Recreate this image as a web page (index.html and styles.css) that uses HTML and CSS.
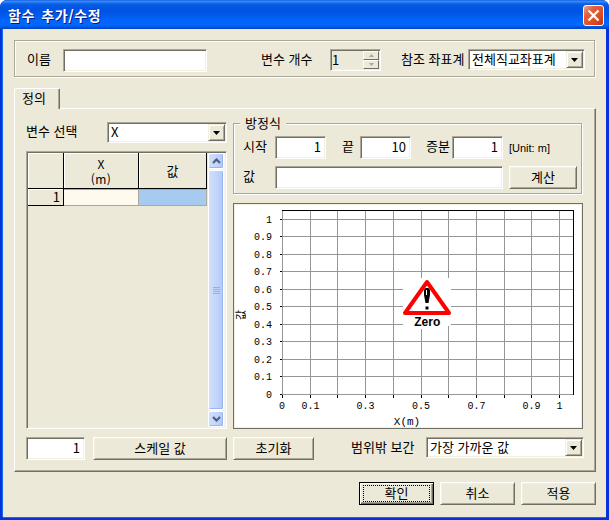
FILE: index.html
```html
<!DOCTYPE html>
<html lang="ko">
<head>
<meta charset="utf-8">
<title>함수 추가/수정</title>
<link rel="stylesheet" href="styles.css">
</head>
<body>
<div class="window">
  <header class="titlebar">
    <h1>함수 추가/수정</h1>
    <button class="close" aria-label="닫기"><svg width="21" height="21" viewBox="0 0 21 21"><path d="M5.5 5.5 15.5 15.5M15.5 5.5 5.5 15.5" stroke="#fff" stroke-width="2.3"/></svg></button>
  </header>
  <main class="client">
    <section class="etched general">
      <label class="l-name">이름</label><div class="field f-name"></div>
      <label class="l-count">변수 개수</label>
      <div class="field spinner"><span>1</span><div class="spin"><i><svg width="5" height="3"><path d="M0 3 2.5 0 5 3z"/></svg></i><i><svg width="5" height="3"><path d="M0 0 2.5 3 5 0z"/></svg></i></div></div>
      <label class="l-ref">참조 좌표계</label>
      <div class="field combo c-ref"><span>전체직교좌표계</span><i class="drop"><svg width="7" height="4"><path d="M0 0H7L3.5 4z"/></svg></i></div>
    </section>
    <div class="tab">정의</div>
    <section class="panel">
      <div class="columns">
        <div class="left">
          <div class="select-row"><label>변수 선택</label><div class="field combo c-var"><span>X</span><i class="drop"><svg width="7" height="4"><path d="M0 0H7L3.5 4z"/></svg></i></div></div>
          <div class="table field">
            <div class="sheet">
              <div class="hd"></div><div class="hd"><div class="sym">X</div><div class="sym dim">(m)</div></div><div class="hd">값</div>
              <div class="rowno">1</div><div class="cell"></div><div class="cell selected"></div>
            </div>
            <div class="scroll">
              <div class="sbtn"><svg width="9" height="6"><path d="M1 5 4.5 1.5 8 5"/></svg></div>
              <div class="thumb"><b></b><b></b><b></b><b></b></div>
              <div class="sbtn"><svg width="9" height="6"><path d="M1 1 4.5 4.5 8 1"/></svg></div>
            </div>
          </div>
        </div>
        <div class="right">
          <section class="etched equation">
            <h2>방정식</h2>
            <div class="eq-row"><label class="e1">시작</label><div class="field num">1</div><label class="e2">끝</label><div class="field num">10</div><label class="e3">증분</label><div class="field num">1</div><label class="unit">[Unit: m]</label></div>
            <div class="eq-row"><label class="e1">값</label><div class="field formula"></div><button class="btn calc">계산</button></div>
          </section>
          <div class="chart">
            <svg width="348" height="224" viewBox="234 204 348 224">
              <path class="grid" d="M282 219.5H573M282 236.5H573M282 254.5H573M282 271.5H573M282 289.5H573M282 306.5H573M282 324.5H573M282 341.5H573M282 359.5H573M282 376.5H573M282 394.5H573M282.5 211V395M310.5 211V395M337.5 211V395M365.5 211V395M393.5 211V395M421.5 211V395M448.5 211V395M476.5 211V395M504.5 211V395M531.5 211V395M559.5 211V395"/>
              <path class="axis" d="M282 210.5H573.5V395M280 219.5h2M280 236.5h2M280 254.5h2M280 271.5h2M280 289.5h2M280 306.5h2M280 324.5h2M280 341.5h2M280 359.5h2M280 376.5h2M280 394.5h2M282.5 395v3M310.5 395v3M337.5 395v3M365.5 395v3M393.5 395v3M421.5 395v3M448.5 395v3M476.5 395v3M504.5 395v3M531.5 395v3M559.5 395v3"/>
              <g class="ticks y">
                <text x="272" y="223">1</text><text x="272" y="240">0.9</text><text x="272" y="258">0.8</text><text x="272" y="275">0.7</text><text x="272" y="293">0.6</text><text x="272" y="310">0.5</text><text x="272" y="328">0.4</text><text x="272" y="345">0.3</text><text x="272" y="363">0.2</text><text x="272" y="380">0.1</text><text x="272" y="398">0</text>
              </g>
              <g class="ticks x">
                <text x="282" y="409">0</text><text x="310.5" y="409">0.1</text><text x="365.5" y="409">0.3</text><text x="421" y="409">0.5</text><text x="476.5" y="409">0.7</text><text x="531.5" y="409">0.9</text><text x="559.5" y="409">1</text>
              </g>
              <text class="xname" x="407" y="425">X(m)</text>
              <text class="yname" transform="translate(244.5 315) rotate(-90)">값</text>
              <path d="M403 278H451V326H442V329H412V326H403z" fill="#fff"/>
              <path d="M427 282 449 313H405z" fill="#fff" stroke="#f00" stroke-width="4" stroke-linejoin="round"/>
              <path d="M425.5 288h3l1.5 2v5l-1.5 8h-3l-1.5-8v-5zM425.5 306.500h3v3h-3z" fill="#000"/>
              <path d="M426.5 290v5" stroke="#fff" stroke-width="1"/>
              <text class="zero" x="427.3" y="326">Zero</text>
            </svg>
          </div>
        </div>
      </div>
      <div class="tools">
        <div class="field num scale">1</div><button class="btn b-scale">스케일 값</button><button class="btn b-reset">초기화</button>
        <label class="l-out">범위밖 보간</label>
        <div class="field combo c-out"><span>가장 가까운 값</span><i class="drop"><svg width="7" height="4"><path d="M0 0H7L3.5 4z"/></svg></i></div>
      </div>
    </section>
    <footer class="actions"><button class="btn default"><span>확인</span></button><button class="btn">취소</button><button class="btn">적용</button></footer>
  </main>
</div>
</body>
</html>
```
FILE: styles.css
```css
* { box-sizing: border-box; }
body {
  margin: 0;
  background: #fff;
  color: #000;
  font: 13px/15px "Noto Sans CJK KR", "Liberation Sans", sans-serif;
}
h1, h2 { margin: 0; font-size: inherit; font-weight: normal; }
label, span { white-space: nowrap; }
svg { display: block; }
i { font-style: normal; }

.window {
  width: 609px;
  height: 520px;
  border-radius: 7px 7px 0 0;
  overflow: hidden;
  background: #0831d9;
}
.titlebar {
  height: 29px;
  display: flex;
  justify-content: space-between;
  padding: 5px 5px 0 8px;
  background: linear-gradient(#0a4fd4 0, #3c90ff 1px, #2a80f6 2px, #0a5fe6 4px, #0054e3 8px, #0055e5 13px, #0064fa 20px, #0068ff 25px, #0055e0 27px, #0042c4 29px);
}
.titlebar h1 {
  color: #fff;
  font-size: 14px;
  font-weight: bold;
  line-height: 20px;
  letter-spacing: .55px;
  word-spacing: 2px;
  text-shadow: 1px 1px #0a1883;
}
.close {
  width: 21px;
  height: 21px;
  padding: 0;
  border: 1px solid #fff;
  border-radius: 3px;
  background: linear-gradient(135deg, #f0a48c 0, #e2603c 30%, #dc4a20 70%, #b93412 100%);
}
.close svg { margin: -1px; }
.client {
  height: 488px;
  margin: 0 3px;
  padding: 11px 0 0 11px;
  background: #ece9d8;
  box-shadow: -1px 0 #166aee, 0 1px #166aee, 1px 0 #0831d9;
}

.etched {
  border: 1px solid #aca899;
  box-shadow: inset 1px 1px #fff, 1px 1px #fff;
}
.field {
  background: #fff;
  border: 1px solid;
  border-color: #aca899 #fff #fff #aca899;
  box-shadow: inset 1px 1px #716f64, inset -1px -1px #f1efe2;
}
.combo {
  display: flex;
  justify-content: space-between;
  height: 21px;
  padding: 1px;
}
.combo span { padding-left: 2px; line-height: 16px; }
.drop {
  width: 17px;
  height: 17px;
  display: grid;
  place-items: center;
  background: #ece9d8;
  border: 1px solid;
  border-color: #f1efe2 #716f64 #716f64 #f1efe2;
  box-shadow: inset 1px 1px #fff, inset -1px -1px #aca899;
}
.btn {
  height: 23px;
  padding: 0 0 2px;
  border: 1px solid;
  border-color: #fff #716f64 #716f64 #fff;
  box-shadow: inset 1px 1px #f1efe2, inset -1px -1px #aca899;
  background: #ece9d8;
  color: #000;
  font: inherit;
}

.general {
  width: 581px;
  height: 37px;
  display: flex;
  padding: 8px 0 0 12px;
}
.general label { line-height: 20px; }
.l-name { width: 36px; }
.f-name { width: 144px; height: 23px; }
.l-count { width: 69px; margin-left: 54px; }
.spinner {
  width: 51px;
  height: 22px;
  padding: 1px;
  display: flex;
  justify-content: space-between;
  background: #ece9d8;
}
.spinner span { line-height: 17px; }
.spin { width: 16px; display: grid; grid-template-rows: 9px 9px; }
.spin i {
  display: grid;
  place-items: center;
  border: 1px solid;
  border-color: #fff #716f64 #716f64 #fff;
}
.spin path { fill: #aca899; }
.l-ref { width: 67px; margin-left: 20px; }
.c-ref { width: 117px; }

.tab {
  position: relative;
  width: 46px;
  height: 21px;
  margin-top: 11px;
  padding-left: 7px;
  line-height: 17px;
  border: 1px solid;
  border-color: #fff #716f64 transparent #fff;
  border-bottom: 0;
  border-radius: 2px 2px 0 0;
  box-shadow: inset -1px 0 #aca899;
  background: #ece9d8;
}
.panel {
  width: 582px;
  height: 364px;
  margin-top: -1px;
  padding: 13px 0 0 11px;
  border: 1px solid;
  border-color: #fff #716f64 #716f64 #fff;
  box-shadow: inset -1px -1px #aca899;
}
.columns { display: flex; gap: 6px; }
.left { width: 201px; }
.select-row { display: flex; justify-content: space-between; height: 29px; }
.select-row label { line-height: 17px; }
.c-var { width: 120px; }
.table {
  height: 278px;
  padding: 1px;
  display: flex;
  justify-content: space-between;
  background: #ece9d8;
}
.sheet {
  display: grid;
  grid-template-columns: 36px 75px 68px;
  grid-template-rows: 36px 17px;
  align-content: start;
}
.hd {
  display: grid;
  place-items: center;
  align-content: center;
  border-right: 1px solid #000;
  border-bottom: 1px solid #000;
  box-shadow: inset 1px 1px #fff;
}
.sym { font-size: 12px; line-height: 15px; }
.dim { letter-spacing: .5px; }
.rowno {
  padding-right: 3px;
  border-right: 1px solid #000;
  border-bottom: 1px solid #000;
  box-shadow: inset 1px 1px #fff;
  text-align: right;
  line-height: 15px;
}
.cell {
  background: #fffaf0;
  border: 1px solid #aca899;
  border-left: 0;
}
.cell.selected { background: #a6caf0; }
.scroll {
  width: 17px;
  display: grid;
  grid-template-rows: 16px 240px 16px;
  row-gap: 1px;
  padding: 0 1px 0 0;
  background: #f6f5ee;
}
.sbtn, .thumb {
  display: grid;
  place-items: center;
  border: 1px solid #fff;
  border-radius: 2px;
  background: linear-gradient(90deg, #d0dffc, #c1d3fb 60%, #b0c8f8);
  box-shadow: inset -1px -1px #9ab5ee;
}
.sbtn path { fill: none; stroke: #4d6185; stroke-width: 2.2; }
.thumb { align-content: center; row-gap: 1px; }
.thumb b { width: 7px; height: 1px; background: #8cb0f8; }

.right { width: 350px; padding-top: 1px; }
.equation {
  width: 349px;
  height: 71px;
  padding: 12px 0 0 9px;
}
.equation h2 {
  width: 46px;
  height: 15px;
  margin: -21px 0 6px -3px;
  padding-left: 5px;
  line-height: 16px;
  background: #ece9d8;
  white-space: nowrap;
}
.eq-row { display: flex; height: 23px; margin-bottom: 7px; }
.eq-row label { line-height: 20px; }
.e1 { width: 32px; }
.e2 { width: 18px; margin-left: 16px; }
.e3 { width: 26px; margin-left: 15px; }
.num {
  width: 51px;
  height: 23px;
  padding-right: 4px;
  text-align: right;
  line-height: 19px;
}
.eq-row .unit {
  margin-left: 6px;
  font: 11px/24px "Liberation Sans", sans-serif;
}
.formula { width: 228px; }
.calc { width: 68px; margin-left: 6px; }
.chart {
  width: 350px;
  height: 226px;
  margin-top: 9px;
  border: 1px solid #716f64;
  background: #fff;
  box-shadow: inset 0 0 0 1px #f1efe2;
}
.grid { fill: none; stroke: #969696; shape-rendering: crispEdges; }
.axis { fill: none; stroke: #000; shape-rendering: crispEdges; }
.ticks { font: 10px "Liberation Mono", monospace; }
.y { text-anchor: end; }
.x { text-anchor: middle; }
.xname { font: 11px "Liberation Mono", monospace; text-anchor: middle; }
.yname { font-size: 11px; text-anchor: middle; }
.zero { font: bold 12px "Liberation Sans", sans-serif; text-anchor: middle; }

.tools { display: flex; margin-top: 8px; }
.tools .scale { width: 59px; }
.b-scale { width: 134px; margin-left: 8px; }
.b-reset { width: 81px; margin-left: 6px; }
.l-out { width: 75px; margin-left: 37px; line-height: 19px; }
.c-out { width: 158px; }

.actions { display: flex; gap: 6px; margin: 10px 0 0 345px; }
.actions .btn { width: 75px; }
.actions .default {
  padding: 0;
  border-color: #000;
  box-shadow: inset 1px 1px #fff, inset -1px -1px #716f64, inset -2px -2px #aca899;
}
.default span { display: block; height: 17px; margin: 0 3px; border: 1px dotted #000; line-height: 13px; }
```
